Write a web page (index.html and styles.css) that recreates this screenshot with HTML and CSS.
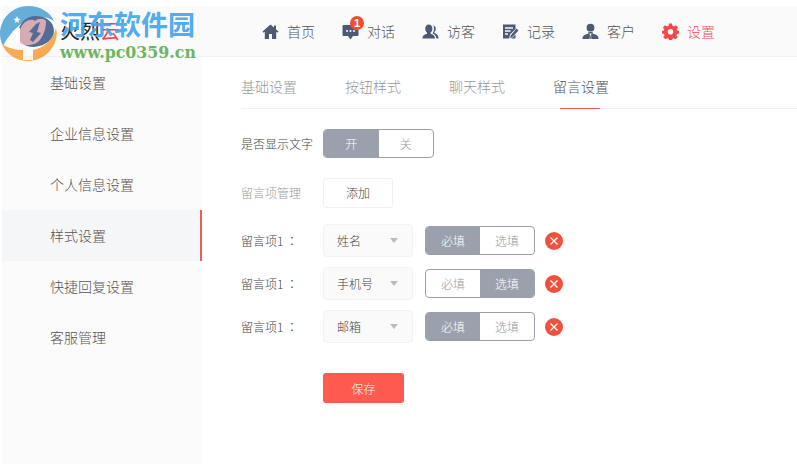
FILE: index.html
```html
<!DOCTYPE html>
<html>
<head>
  <title>设置</title>
  <link rel="stylesheet" href="styles.css">
</head>
<body>
  <div class="page">
    <div class="topbar">
      <div class="brand">火烈<span class="brand-red">云</span></div>
      <div class="nav">
        <div class="nav-item">
          <svg class="nav-icon" viewBox="0 0 17 17"><path d="M8.500 1.500L.5 8.600 1.600 9.800 2.800 8.800V16H7V11H10V16H14.200V8.800L15.400 9.800 16.500 8.600 14 6.400V2.500H12V4.600Z"/></svg>
          <span>首页</span>
        </div>
        <div class="nav-item">
          <span class="nav-icon-wrap">
            <svg class="nav-icon" viewBox="0 0 17 17"><path d="M1.500 2H15.500A1 1 0 0 1 16.500 3V12A1 1 0 0 1 15.500 13H11L8.500 16.500 6 13H1.500A1 1 0 0 1 .5 12V3A1 1 0 0 1 1.500 2Z"/><circle class="icon-cut" cx="5" cy="8" r="1"/><circle class="icon-cut" cx="8.500" cy="8" r="1"/><circle class="icon-cut" cx="12" cy="8" r="1"/></svg>
            <span class="badge">1</span>
          </span>
          <span>对话</span>
        </div>
        <div class="nav-item">
          <svg class="nav-icon" viewBox="0 0 17 17"><path d="M6.800 1.500C9.100 1.500 10.400 3.300 10.400 5.500 10.400 7.400 9.600 8.800 8.600 9.600V10.800C10.800 11.500 13 12.400 13 15.500H.5C.5 12.400 2.800 11.500 5 10.800V9.600C4 8.800 3.200 7.400 3.200 5.500 3.200 3.300 4.500 1.500 6.800 1.500Z"/><path d="M11.400 2.500C13 3 13.800 4.200 13.800 5.800 13.800 7.200 13.200 8.300 12.400 9V10C14.600 10.800 16.500 12 16.500 15.500H14.400C14.200 13 12.900 11.400 10.700 10.400V9.900C11.500 8.800 12 7.300 12 5.500 12 4.400 11.800 3.400 11.400 2.500Z"/></svg>
          <span>访客</span>
        </div>
        <div class="nav-item">
          <svg class="nav-icon" viewBox="0 0 17 17"><path d="M1 1.500H13.500V6L8 11.500 7.200 15.500H1Z"/><path class="icon-line" d="M3 5H11M3 8H8.500M3 11H6"/><path d="M14.500 5.500L16.500 7.500 10 14.500 8.200 15.200 8.700 12.500Z"/><path d="M9.500 15.500L13.500 11.500V15.500Z"/></svg>
          <span>记录</span>
        </div>
        <div class="nav-item">
          <svg class="nav-icon" viewBox="0 0 17 17"><circle cx="8.500" cy="4.700" r="3.900"/><path d="M6.400 9H10.600V10.500L14 11.700C15.800 12.400 16.500 13.800 16.500 16H.5C.5 13.800 1.200 12.400 3 11.700L6.400 10.500Z"/><path class="icon-cut" d="M7.200 10.600H9.800L9 12 9.500 16H7.500L8 12Z"/><path d="M8.500 12L9.300 15.500H7.700Z"/></svg>
          <span>客户</span>
        </div>
        <div class="nav-item nav-active">
          <svg class="nav-icon" viewBox="0 0 17 17"><path fill-rule="evenodd" d="M7 .5H10L10.500 2.800 11.900 3.400 14 2.200 16 4.500 14.700 6.400 15.200 7.500 17 8V10.500L15 11 14.500 12.300 15.700 14.300 13.500 16.300 11.700 15.200 10.400 15.700 10 17H7L6.600 15.700 5.300 15.200 3.500 16.300 1.300 14.300 2.500 12.300 2 11 0 10.500V8L1.800 7.500 2.300 6.400 1 4.500 3 2.200 5.100 3.400 6.500 2.800ZM8.500 6A2.800 2.800 0 1 0 8.500 11.600 2.800 2.800 0 1 0 8.500 6Z"/></svg>
          <span>设置</span>
        </div>
      </div>
    </div>

    <div class="main">
      <div class="sidebar">
        <div class="side-item">基础设置</div>
        <div class="side-item">企业信息设置</div>
        <div class="side-item">个人信息设置</div>
        <div class="side-item side-active">样式设置</div>
        <div class="side-item">快捷回复设置</div>
        <div class="side-item">客服管理</div>
      </div>

      <div class="content">
        <div class="tabs">
          <div class="tab">基础设置</div>
          <div class="tab">按钮样式</div>
          <div class="tab">聊天样式</div>
          <div class="tab tab-active">留言设置</div>
        </div>

        <div class="form">
          <div class="row row-text">
            <label class="row-label label-dark">是否显示文字</label>
            <div class="toggle toggle-wide">
              <span class="toggle-part part-on">开</span>
              <span class="toggle-part">关</span>
            </div>
          </div>

          <div class="row row-add">
            <label class="row-label">留言项管理</label>
            <button class="add-btn">添加</button>
          </div>

          <div class="row item-row">
            <label class="row-label label-dark">留言项1 <span class="colon">：</span></label>
            <div class="select">姓名<i class="caret"></i></div>
            <div class="toggle">
              <span class="toggle-part part-on">必填</span>
              <span class="toggle-part">选填</span>
            </div>
            <span class="remove"><svg viewBox="0 0 18 18"><path d="M5.500 5.500L12.500 12.500M12.500 5.500L5.500 12.500"/></svg></span>
          </div>

          <div class="row item-row">
            <label class="row-label label-dark">留言项1 <span class="colon">：</span></label>
            <div class="select">手机号<i class="caret"></i></div>
            <div class="toggle">
              <span class="toggle-part">必填</span>
              <span class="toggle-part part-on">选填</span>
            </div>
            <span class="remove"><svg viewBox="0 0 18 18"><path d="M5.500 5.500L12.500 12.500M12.500 5.500L5.500 12.500"/></svg></span>
          </div>

          <div class="row item-row">
            <label class="row-label label-dark">留言项1 <span class="colon">：</span></label>
            <div class="select">邮箱<i class="caret"></i></div>
            <div class="toggle">
              <span class="toggle-part part-on">必填</span>
              <span class="toggle-part">选填</span>
            </div>
            <span class="remove"><svg viewBox="0 0 18 18"><path d="M5.500 5.500L12.500 12.500M12.500 5.500L5.500 12.500"/></svg></span>
          </div>

          <button class="save-btn">保存</button>
        </div>
      </div>
    </div>
  </div>

  <!-- watermark sits over the header corner -->
  <div class="watermark">
    <svg class="wm-logo" viewBox="0 0 57 62">
      <path fill="#5aa8d8" d="M28 6C40 6 50 12 54 21 44 14 30 16 22 23 15 29 8 36 3 46 1 42 0 38 0 34 0 18 13 6 28 6Z"/>
      <path fill="#45608f" d="M36 16C46 16 54 22 54 31 54 39 46 46 34 47 24 47 17 41 18 33 19 23 26 16 36 16Z"/>
      <path fill="#f6b6b4" opacity=".8" d="M24 23C28 19 33 19 35 21 38 18 44 18 46 21 46 28 44 36 38 42 32 46 24 46 20 43 18 36 19 28 24 23Z"/>
      <path fill="#45608f" d="M36 24L40 22 37 32 41 33 33 42 30 40 33 33 29 32Z"/>
      <path fill="#f7a544" d="M56 28C57 32 57 35 56 39 53 51 42 61 28 61 16 61 6 54 2 44 8 48 16 50 23 50V60H33V50C44 48 53 40 56 28Z"/>
      <path fill="#f7a544" d="M10 49L16 51V56L10 53ZM38 49L44 46V54L38 57Z"/>
      <path fill="#fff" d="M12 32L17 28H20V43H16V33L13 35Z"/>
      <path fill="#fff" d="M17 16L18 18.500 20.500 19 18.500 20.500 19 23 17 21.500 15 23 15.500 20.500 13.500 19 16 18.500Z"/>
    </svg>
    <div class="wm-text">
      <div class="wm-title">河东软件园</div>
      <div class="wm-url">www.pc0359.cn</div>
    </div>
  </div>
</body>
</html>
```

FILE: styles.css
```css
html, body {
  margin: 0;
  height: 100%;
  overflow: hidden;
  background: #fff;
}

body {
  font-family: "Noto Sans CJK SC", "Liberation Sans", sans-serif;
  font-size: 12px;
  font-weight: 300;
  color: #555;
}

.page {
  height: 100%;
  box-sizing: border-box;
  padding: 6px 0 0 2px;
  display: flex;
  flex-direction: column;
}

/* Top bar */
.topbar {
  height: 50px;
  flex: none;
  display: flex;
  align-items: center;
  background: #fafafa;
  border-bottom: 1px solid #f0f0f0;
}

.brand {
  width: 260px;
  box-sizing: border-box;
  padding-left: 58px;
  font-size: 20px;
  line-height: 24px;
  font-weight: 400;
  color: #222;
}

.brand-red {
  color: #e8485a;
}

.nav {
  display: flex;
  gap: 27px;
}

.nav-item {
  display: flex;
  align-items: center;
  gap: 8px;
  font-size: 14px;
  line-height: 20px;
  color: #555;
}

.nav-icon {
  display: block;
  width: 17px;
  height: 17px;
  fill: #4d5a75;
}

.icon-cut {
  fill: #fafafa;
}

.icon-line {
  fill: none;
  stroke: #fafafa;
  stroke-width: 1.3;
}

.nav-icon-wrap {
  position: relative;
  display: block;
}

.badge {
  position: absolute;
  left: 8px;
  top: -7px;
  width: 14px;
  height: 14px;
  border-radius: 50%;
  background: #f04e30;
  color: #fff;
  font-family: "Liberation Sans", sans-serif;
  font-size: 11px;
  font-weight: bold;
  line-height: 14px;
  text-align: center;
}

.nav-active {
  color: #f4544f;
}

.nav-active .nav-icon {
  fill: #f4474a;
}

/* Sidebar */
.main {
  flex: 1;
  display: flex;
  min-height: 0;
}

.sidebar {
  width: 200px;
  flex: none;
  background: #fbfbfb;
}

.side-item {
  height: 51px;
  box-sizing: border-box;
  padding-left: 48px;
  font-size: 14px;
  line-height: 51px;
  color: #555;
}

.side-active {
  background: #f5f6f8;
  border-right: 2px solid #e8605c;
}

/* Tabs */
.content {
  flex: 1;
  padding: 0 0 0 39px;
}

.tabs {
  height: 52px;
  box-sizing: border-box;
  display: flex;
  gap: 48px;
  border-bottom: 1px solid #f0f0f0;
}

.tab {
  position: relative;
  font-size: 14px;
  line-height: 58px;
  color: #999;
}

.tab-active {
  color: #555;
}

.tab-active::after {
  content: "";
  position: absolute;
  left: 7px;
  right: 9px;
  bottom: -1px;
  height: 1px;
  background: #ee5a50;
}

/* Form */
.form {
  padding-top: 19px;
}

.row {
  display: flex;
  align-items: center;
}

.row-text {
  height: 30px;
  margin-bottom: 19px;
}

.row-add {
  height: 31px;
  margin-bottom: 16px;
}

.item-row {
  height: 33px;
  margin-bottom: 10px;
}

.row-label {
  width: 82px;
  flex: none;
  font-size: 12px;
  color: #999;
}

.label-dark {
  color: #444;
}

.colon {
  font-family: "Noto Sans CJK TC", sans-serif;
}

.toggle {
  width: 110px;
  height: 29px;
  box-sizing: border-box;
  flex: none;
  display: flex;
  overflow: hidden;
  border: 1px solid #9aa1ac;
  border-radius: 4px;
  background: #fff;
}

.toggle-wide {
  width: 111px;
}

.toggle-part {
  flex: 1;
  font-size: 12px;
  line-height: 27px;
  text-align: center;
  color: #999;
}

.part-on {
  background: #9aa1ac;
  color: #fff;
}

.add-btn {
  width: 70px;
  height: 30px;
  padding: 0;
  border: 1px solid #f0f0f0;
  border-radius: 3px;
  background: #fff;
  font-family: inherit;
  font-size: 12px;
  font-weight: 300;
  color: #444;
}

.select {
  position: relative;
  width: 90px;
  height: 33px;
  box-sizing: border-box;
  flex: none;
  margin-right: 12px;
  padding-left: 13px;
  border: 1px solid #f2f2f2;
  border-radius: 4px;
  background: #fafafa;
  font-size: 12px;
  line-height: 32px;
  color: #444;
}

.caret {
  position: absolute;
  right: 14px;
  top: 13px;
  border-style: solid;
  border-width: 5px 4px 0;
  border-color: #bbb transparent transparent;
}

.remove {
  width: 18px;
  height: 18px;
  margin-left: 10px;
  flex: none;
  border-radius: 50%;
  background: #f2503f;
}

.remove svg {
  display: block;
  fill: none;
  stroke: #fff;
  stroke-width: 1.4;
}

.save-btn {
  display: block;
  width: 81px;
  height: 30px;
  margin: 30px 0 0 82px;
  padding: 0;
  border: 0;
  border-radius: 3px;
  background: #fe5a50;
  font-family: inherit;
  font-size: 12px;
  font-weight: 300;
  color: #fff;
}

/* Watermark */
.watermark {
  position: absolute;
  left: 0;
  top: 0;
  display: flex;
  pointer-events: none;
}

.wm-logo {
  display: block;
  width: 57px;
  height: 62px;
  opacity: .92;
}

.wm-text {
  margin: 7px 0 0 3px;
}

.wm-title {
  font-size: 27px;
  font-weight: bold;
  line-height: 34px;
  color: rgba(64, 164, 240, .92);
}

.wm-url {
  margin-top: 3px;
  font-family: "DejaVu Serif", serif;
  font-size: 15.800px;
  font-weight: bold;
  line-height: 18px;
  color: #6db562;
}
```
